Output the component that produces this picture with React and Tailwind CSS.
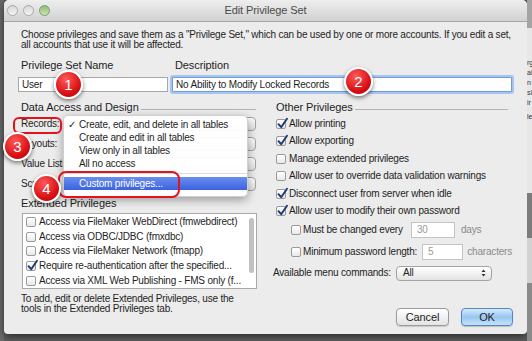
import React from 'react';

const Checkbox = ({ checked }) => (
  <span className="relative inline-block w-[10px] h-[10px] shrink-0 rounded-[2px] border border-[#9a9a9a] bg-linear-to-b from-white to-[#e9e9e9]">
    {checked && (
      <svg className="absolute -left-[1px] -top-[3px] w-[13px] h-[13px]" viewBox="0 0 13 13">
        <path d="M2.5 7.2 L5.2 10.2 L11 1.8" fill="none" stroke="#1f3c78" strokeWidth="2" strokeLinecap="round" strokeLinejoin="round" />
      </svg>
    )}
  </span>
);

const Badge = ({ n, className }) => (
  <div className={`absolute w-[29px] h-[29px] rounded-full border-2 border-white shadow-[0_2px_4px_rgba(0,0,0,0.5)] bg-[radial-gradient(circle_at_40%_30%,#ff5a5a,#d60d12_65%,#b10006)] flex items-center justify-center text-white text-[15px] leading-none ${className}`}>
    {n}
  </div>
);

const Popup = () => (
  <div className="ml-auto mr-[1px] w-[150px] h-[14px] rounded-[4px] border border-[#a3a3a3] bg-linear-to-b from-white to-[#e0e0e0]" />
);

const SectionTitle = ({ children, className = '' }) => (
  <div className={`h-[14px] flex items-center pl-[3px] text-[11px] tracking-[-0.1px] ${className}`}>
    <span>{children}</span>
    <div className="flex-1 h-px bg-[#b4b4b4] ml-[2px] mt-[5px]" />
  </div>
);

const Window = () => {
  const access = ['Records:', 'Layouts:', 'Value Lists:', 'Scripts:'];
  const extended = [
    [false, 'Access via FileMaker WebDirect (fmwebdirect)'],
    [false, 'Access via ODBC/JDBC (fmxdbc)'],
    [false, 'Access via FileMaker Network (fmapp)'],
    [true, 'Require re-authentication after the specified...'],
    [false, 'Access via XML Web Publishing - FMS only (f...'],
  ];
  const other = [
    [true, 'Allow printing'],
    [true, 'Allow exporting'],
    [false, 'Manage extended privileges'],
    [false, 'Allow user to override data validation warnings'],
    [true, 'Disconnect user from server when idle'],
    [true, 'Allow user to modify their own password'],
  ];

  return (
    <div className="w-[523px] h-[334px] shrink-0 flex flex-col bg-[#ececec] rounded-t-[5px] rounded-b-[4px] shadow-[0_2px_8px_rgba(0,0,0,0.6)] overflow-hidden">
      <div className="h-[22px] shrink-0 grid grid-cols-[1fr_auto_1fr] items-center bg-linear-to-b from-[#eeeeee] to-[#d2d2d2] border-b border-[#a6a6a6]">
        <div className="flex gap-[5px] pl-[3px]">
          <span className="w-[11px] h-[11px] rounded-full border border-[#a9a9a9] bg-linear-to-b from-[#d8d8d8] to-[#f4f4f4]" />
          <span className="w-[11px] h-[11px] rounded-full border border-[#a9a9a9] bg-linear-to-b from-[#d8d8d8] to-[#f4f4f4]" />
          <span className="w-[11px] h-[11px] rounded-full border border-[#7d9a6f] bg-linear-to-b from-[#8fbd78] to-[#c8e4b5]" />
        </div>
        <div className="text-[11px] text-[#4a4a4a] tracking-[-0.1px]">Edit Privilege Set</div>
        <div />
      </div>

      <div className="flex flex-col px-[14px] pt-[8px] text-[10px] leading-[10px] tracking-[-0.2px]">
        <div className="pl-[3px]">
          <div>Choose privileges and save them as a "Privilege Set," which can be used by one or more accounts. If you edit a set,</div>
          <div>all accounts that use it will be affected.</div>
        </div>

        <div className="mt-[8px] h-[14px] flex items-center text-[11px] tracking-[-0.1px]">
          <div className="w-[154px] pl-[3px]">Privilege Set Name</div>
          <div className="pl-[3px]">Description</div>
        </div>
        <div className="mt-[5px] flex gap-[4px]">
          <div className="w-[150px] h-[15px] border border-[#a8a8a8] bg-white px-[3px] flex items-center">User</div>
          <div className="w-[340px] h-[15px] border border-[#6f9bd6] shadow-[0_0_0_2px_#a7c6ef] rounded-[1px] bg-white px-[3px] flex items-center">No Ability to Modify Locked Records</div>
        </div>

        <div className="mt-[8px] flex">
          <div className="w-[239px] flex flex-col">
            <SectionTitle className="pr-[1px]">Data Access and Design</SectionTitle>
            {access.map((label) => (
              <div key={label} className="h-[20px] flex items-center pl-[3px]">
                <span>{label}</span>
                <Popup />
              </div>
            ))}
            <div className="mt-[2px] h-[14px] flex items-center pl-[3px] text-[11px] tracking-[-0.1px]">Extended Privileges</div>
            <div className="mt-[3px] ml-[4px] w-[235px] h-[76px] border border-[#a9a9a9] bg-white flex">
              <div className="flex-1 flex flex-col pt-[1px] overflow-hidden">
                {extended.map(([c, t]) => (
                  <div key={t} className="h-[15px] flex items-center gap-[3px] pl-[3px] whitespace-nowrap">
                    <Checkbox checked={c} />
                    <span>{t}</span>
                  </div>
                ))}
              </div>
              <div className="w-[9px] flex justify-center pt-[4px]">
                <div className="w-[5px] h-[55px] rounded-full bg-[#c1c1c1]" />
              </div>
            </div>
            <div className="mt-[5px] pl-[3px]">
              <div>To add, edit or delete Extended Privileges, use the</div>
              <div>tools in the Extended Privileges tab.</div>
            </div>
          </div>

          <div className="ml-[16px] w-[239px] flex flex-col">
            <SectionTitle className="pr-[4px]">Other Privileges</SectionTitle>
            <div className="mt-[1px] flex flex-col">
              {other.map(([c, t]) => (
                <div key={t} className="h-[17.5px] flex items-center gap-[3px] pl-[3px] whitespace-nowrap">
                  <Checkbox checked={c} />
                  <span>{t}</span>
                </div>
              ))}
            </div>
            <div className="h-[20px] flex items-center pl-[18px] whitespace-nowrap">
              <Checkbox />
              <span className="w-[110px] pl-[2px]">Must be changed every</span>
              <div className="w-[44px] h-[16px] border border-[#c4c4c4] bg-white pl-[5px] flex items-center text-[#9a9a9a]">30</div>
              <span className="ml-[6px] text-[#8a8a8a]">days</span>
            </div>
            <div className="mt-[2px] h-[20px] flex items-center pl-[18px] whitespace-nowrap">
              <Checkbox />
              <span className="w-[127px] pl-[2px]">Minimum password length:</span>
              <div className="w-[43px] h-[16px] border border-[#c4c4c4] bg-white pl-[5px] flex items-center text-[#9a9a9a]">5</div>
              <span className="ml-[4px] text-[#8a8a8a]">characters</span>
            </div>
            <div className="mt-[1px] h-[20px] flex items-center whitespace-nowrap">
              <span className="w-[123px]">Available menu commands:</span>
              <div className="w-[96px] h-[15px] rounded-[4px] border border-[#a3a3a3] bg-linear-to-b from-white to-[#e3e3e3] flex items-center pl-[6px] pr-[5px]">
                <span className="flex-1">All</span>
                <svg width="5" height="8" viewBox="0 0 5 8">
                  <path d="M0.5 3 L2.5 0.5 L4.5 3 Z M0.5 5 L2.5 7.5 L4.5 5 Z" fill="#333" />
                </svg>
              </div>
            </div>
            <div className="mt-[25px] -mr-[1px] flex justify-end gap-[12px] text-[11px] tracking-[-0.1px]">
              <div className="w-[53px] h-[18px] rounded-[4px] border border-[#9a9a9a] bg-linear-to-b from-white to-[#e4e4e4] shadow-[0_1px_1px_rgba(0,0,0,0.15)] flex items-center justify-center">Cancel</div>
              <div className="w-[52px] h-[18px] rounded-[4px] border border-[#5784c6] bg-linear-to-b from-[#d6ebfc] via-[#97c6f1] to-[#c6e3fb] shadow-[0_1px_1px_rgba(0,0,0,0.2)] flex items-center justify-center">OK</div>
            </div>
          </div>
        </div>
      </div>
    </div>
  );
};

const Backdrop = () => (
  <div className="flex-1 flex flex-col text-[7px] leading-[10px] text-[#333] overflow-hidden">
    <div className="h-[28px] bg-[#a4a4a4]" />
    <div className="h-[165px] bg-[#e7e7e7] flex flex-col pt-[30px] whitespace-nowrap">
      <span>rg</span>
      <span>al</span>
      <span>n</span>
      <span>si</span>
      <span>ir</span>
      <span className="mt-[4px]">le</span>
    </div>
    <div className="h-[45px] bg-[#7c7c7c]" />
    <div className="h-[45px] bg-[#d2d2d2]" />
    <div className="flex-1 bg-[#8a8a8a]" />
  </div>
);

export default function App() {
  return (
    <div className="relative w-[532px] h-[341px] overflow-hidden flex bg-[#5e5e5e] font-['Liberation_Sans',Arial,sans-serif] text-[#1e1e1e]">
      <div className="w-[4px] shrink-0 bg-[#6c6c6c]" />
      <Window />
      <Backdrop />

      {/* open records menu */}
      <div className="absolute left-[63px] top-[115px] w-[185px] h-[82px] rounded-[5px] bg-white/95 border border-[#cfcfcf] shadow-[0_3px_10px_rgba(0,0,0,0.35)] pt-[2px] text-[10px] tracking-[-0.2px] whitespace-nowrap">
        {['Create, edit, and delete in all tables', 'Create and edit in all tables', 'View only in all tables', 'All no access'].map((t, i) => (
          <div key={t} className="h-[13px] flex items-center">
            <span className="w-[15px] text-center">{i === 0 ? '✓' : ''}</span>
            <span>{t}</span>
          </div>
        ))}
        <div className="h-[7px] flex items-center">
          <div className="h-px w-full bg-[#dcdcdc]" />
        </div>
        <div className="h-[13px] flex items-center bg-linear-to-b from-[#6b8df0] to-[#3b62de] text-white">
          <span className="w-[15px]" />
          <span>Custom privileges...</span>
        </div>
      </div>

      <div className="absolute left-[13px] top-[117px] w-[49px] h-[17px] rounded-[6px] border-[2.5px] border-[#e5121b]" />
      <div className="absolute left-[58px] top-[171px] w-[122px] h-[27px] rounded-[8px] border-[2.5px] border-[#e5121b]" />

      <Badge n="1" className="left-[54px] top-[70px]" />
      <Badge n="2" className="left-[344px] top-[67px]" />
      <Badge n="3" className="left-[3px] top-[132px]" />
      <Badge n="4" className="left-[32px] top-[174px]" />
    </div>
  );
}
